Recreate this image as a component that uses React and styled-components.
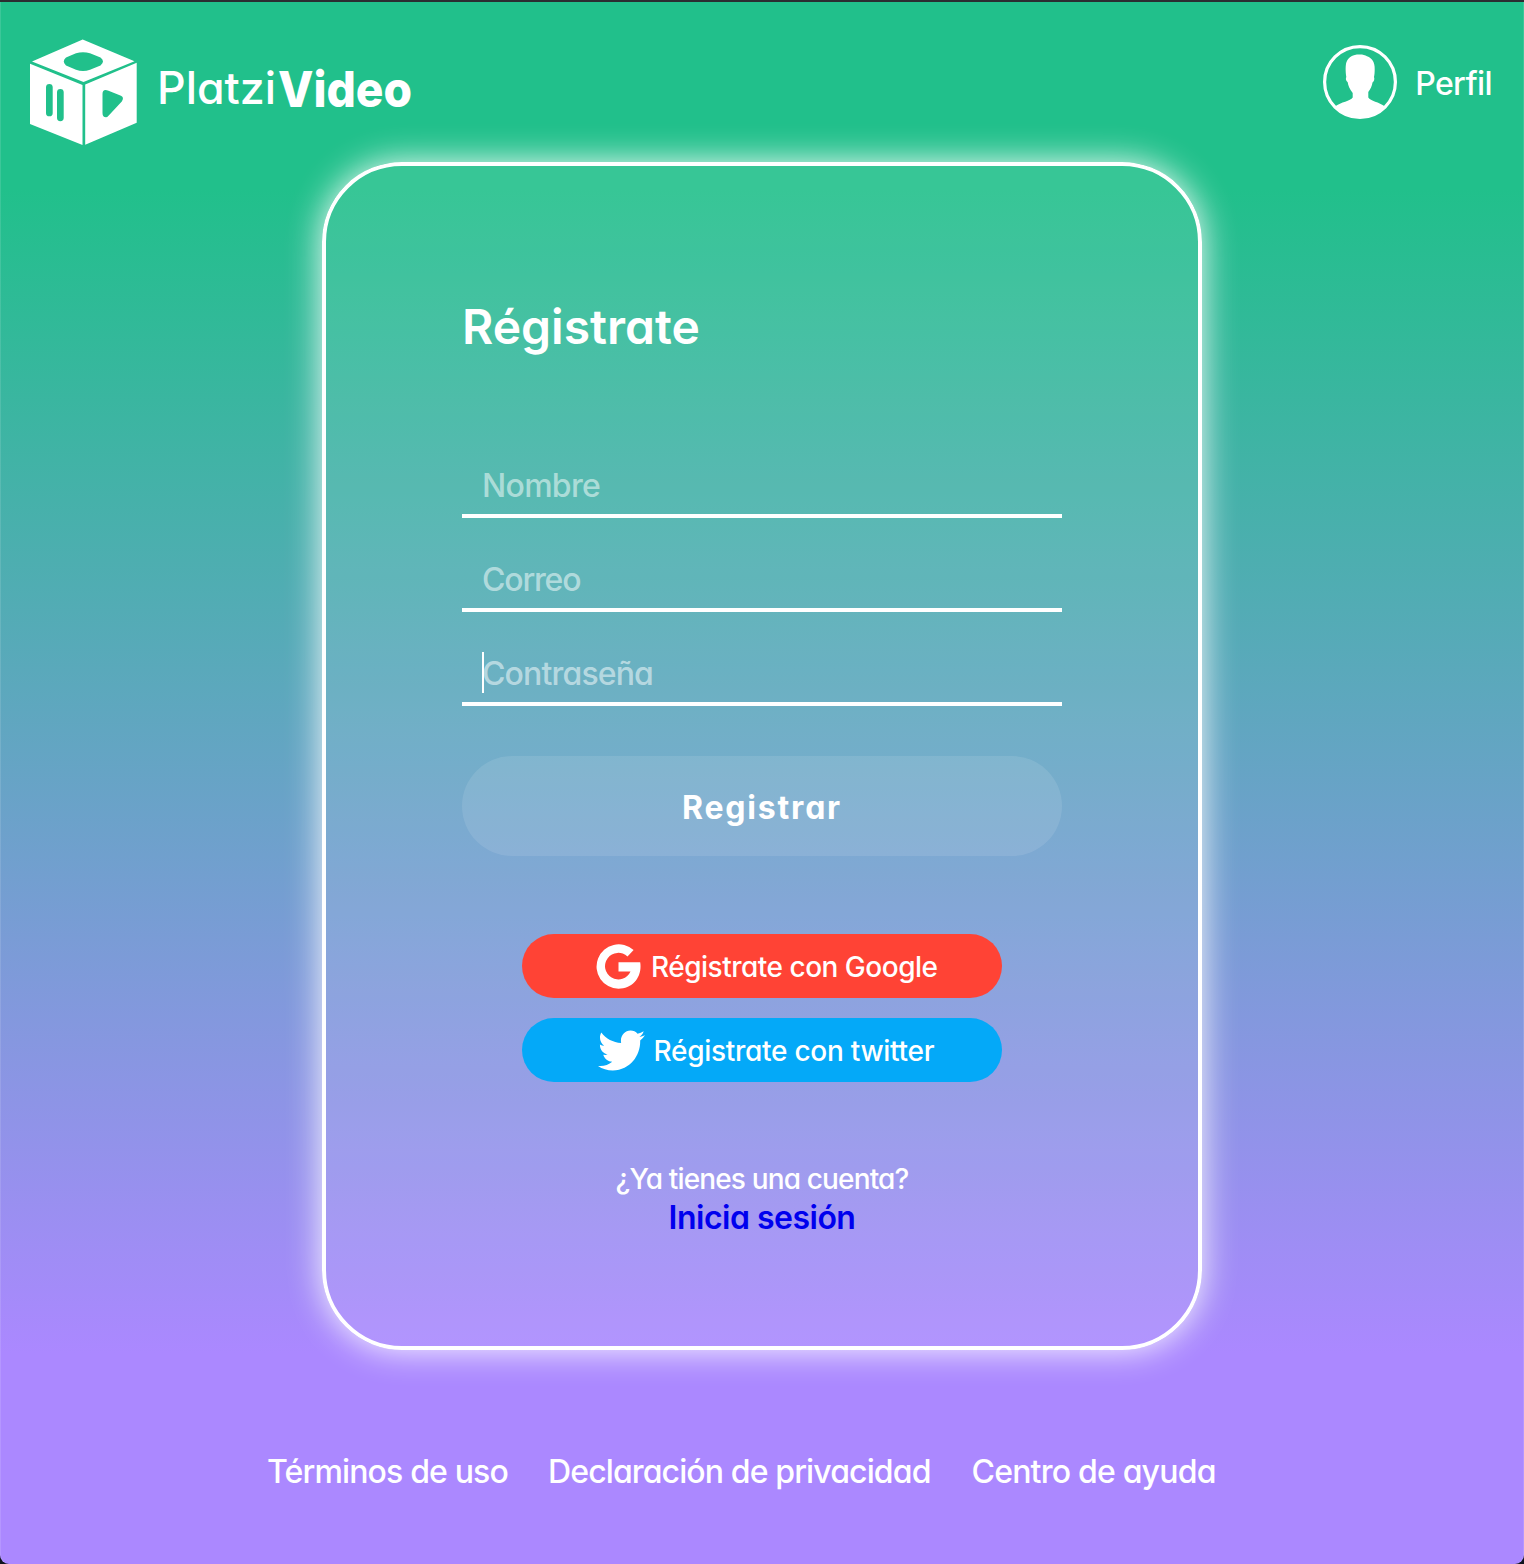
import React from "react";
import styled, { createGlobalStyle } from "styled-components";
import { FaTwitter } from "react-icons/fa";

const GlobalStyle = createGlobalStyle`
  * { box-sizing: border-box; }
  body {
    margin: 0;
    background: #10131f;
    font-family: Inter, Lato, "Open Sans", sans-serif;
    font-feature-settings: "cv11" 1;
    color: #fff;
  }
`;

const Page = styled.div`
  display: flex;
  flex-direction: column;
  width: 1524px;
  height: 1564px;
  overflow: hidden;
  border-top: 2px solid #2b2d31;
  border-radius: 0 0 9px 9px;
  background: linear-gradient(#21c08b 12%, #ab88ff 86.5%);
  box-shadow: inset 1px 0 rgba(255, 255, 255, 0.12), inset -1px 0 rgba(255, 255, 255, 0.12);
`;

const Header = styled.header`
  display: flex;
  justify-content: space-between;
  align-items: flex-start;
  height: 160px;
  padding: 37px 32px 0 30px;
`;

const Logo = styled.svg`
  display: block;
  width: 390px;
  height: 107px;
`;

const Profile = styled.div`
  display: flex;
  align-items: center;
  gap: 18px;
  margin-top: 6px;
`;

const Label = styled.span`
  padding-top: ${(p) => p.$drop || 0}px;
  font-size: ${(p) => p.$size || 32}px;
  font-weight: ${(p) => p.$weight || 500};
  line-height: ${(p) => p.$line || 40}px;
  letter-spacing: ${(p) => p.$track || 0}px;
  white-space: nowrap;
`;

const Avatar = styled.svg`
  width: 74px;
  height: 74px;
`;

const Card = styled.main`
  display: flex;
  flex-direction: column;
  align-items: center;
  align-self: center;
  width: 880px;
  height: 1188px;
  padding: 126px 136px 0;
  border: 4px solid #fff;
  border-radius: 80px;
  background: rgba(255, 255, 255, 0.1);
  box-shadow: 0 0 34px rgba(255, 255, 255, 0.95);
`;

const Title = styled.h1`
  align-self: flex-start;
  margin: 0;
  font-size: 48px;
  font-weight: 600;
  line-height: 70px;
  letter-spacing: ${(p) => p.$track}px;
`;

const Form = styled.form`
  display: flex;
  flex-direction: column;
  width: 600px;
  margin-top: 92px;
`;

const Field = styled.label`
  position: relative;
  display: block;
  height: 64px;
  margin-bottom: 30px;
  border-bottom: 4px solid #fff;
`;

const Input = styled.input`
  width: 100%;
  height: 60px;
  padding: 2px 20px 0;
  border: 0;
  outline: 0;
  background: transparent;
  color: #fff;
  font: 500 32px Inter, Lato, sans-serif;
  font-feature-settings: "cv11" 1;
  letter-spacing: ${(p) => p.$track}px;
  &::placeholder { color: rgba(255, 255, 255, 0.52); opacity: 1; }
`;

const Caret = styled.i`
  position: absolute;
  left: 20px;
  top: 10px;
  width: 2px;
  height: 41px;
  background: #fff;
`;

const Submit = styled.button`
  height: 100px;
  margin-top: 20px;
  padding-top: 3px;
  border: 0;
  border-radius: 50px;
  background: rgba(255, 255, 255, 0.1);
  color: #fff;
  font: 700 32px Inter, Lato, sans-serif;
  font-feature-settings: "cv11" 1;
  letter-spacing: 1.8px;
`;

const Socials = styled.div`
  display: flex;
  flex-direction: column;
  gap: 20px;
  margin-top: 78px;
`;

const Social = styled.button`
  display: flex;
  align-items: center;
  width: 480px;
  height: 64px;
  padding: 0 0 0 ${(p) => p.$inset}px;
  gap: ${(p) => p.$gap}px;
  border: 0;
  border-radius: 32px;
  background: ${(p) => p.$color};
  color: #fff;
  font-family: inherit;
  font-feature-settings: inherit;
`;

const GoogleMark = styled.svg`
  width: 45px;
  height: 45px;
  flex: none;
`;

const Bird = styled(FaTwitter)`
  width: 47px;
  height: 49px;
  flex: none;
`;

const Account = styled.div`
  display: flex;
  flex-direction: column;
  align-items: center;
  margin-top: 78px;
`;

const Login = styled(Label).attrs({ as: "a" })`
  color: #0000ee;
`;

const Footer = styled.footer`
  display: flex;
  gap: 40px;
  margin: 102px 0 0 267px;
`;

const FootLink = styled(Label)`
  width: ${(p) => p.$width}px;
`;

function PlatziLogo() {
  return (
    <Logo viewBox="30 39 390 107" fill="#fff">
      <path fillRule="evenodd" d="M82.7 39.5 134.5 61.2 83.5 82 32 61.6ZM76 53.2 66 57.6Q61.5 61.5 66 65.4L76 69.8Q83 72.3 90 69.8L100.5 65.4Q105.5 61.5 100.5 57.6L90 53.2Q83 51.2 76 53.2Z" />
      <path fillRule="evenodd" d="M30 63.7 82.5 85V145L30 124ZM46 87.3V113A3.35 3.35 0 0 0 52.7 113V87.3A3.35 3.35 0 0 0 46 87.3ZM57 92.3V117.8A3.35 3.35 0 0 0 63.7 117.8V92.3A3.35 3.35 0 0 0 57 92.3Z" />
      <path fillRule="evenodd" d="M85.2 84.5 136.7 62.7V122.7L85.2 144.8ZM102.5 94V113Q102.5 117.3 106 117.3Q107.2 117.3 108.5 115.8L121.8 101.5Q124.5 97.5 121 95.8L108.5 90.7Q102.5 88.5 102.5 94Z" />
      <text x="157" y="103.5" fontSize="44.5" fontWeight="500" textLength="119" lengthAdjust="spacingAndGlyphs">Platzi</text>
      <text x="278" y="107" fontSize="50" fontWeight="800" textLength="134" lengthAdjust="spacingAndGlyphs">Video</text>
    </Logo>
  );
}

function UserIcon() {
  return (
    <Avatar viewBox="0 0 74 74">
      <circle cx="37" cy="37" r="35.4" fill="none" stroke="#fff" strokeWidth="3.2" />
      <path fill="#fff" d="M29.7 52.5V48C26.500 44 25 40 24.700 37.200C22.800 36 22.500 33.500 23.300 32C22.500 27 22.300 20 23.500 17C26 11.500 30 9.500 36 9.500C39 9.300 42 10 44 11.200C49.500 13 51.900 18 51.700 24C51.700 27 51.500 30 51 32C51.800 34 51 36.500 49.500 37.500C49 41 47.500 44 45.300 47V52.500C47.500 56 56 57 62 61.500Q51 73 37 73Q23 73 12 61.500C18 57 27.500 56 29.700 52.500Z" />
    </Avatar>
  );
}

export default function App() {
  return (
    <>
      <GlobalStyle />
      <Page>
        <Header>
          <PlatziLogo />
          <Profile>
            <UserIcon />
            <Label $drop={3} $track={-0.6}>Perfil</Label>
          </Profile>
        </Header>
        <Card>
          <Title $track={0}>Régistrate</Title>
          <Form onSubmit={(e) => e.preventDefault()}>
            <Field><Input placeholder="Nombre" $track={-0.7} /></Field>
            <Field><Input placeholder="Correo" $track={-1.2} /></Field>
            <Field>
              <Input type="password" placeholder="Contraseña" $track={-0.85} />
              <Caret />
            </Field>
            <Submit>Registrar</Submit>
          </Form>
          <Socials>
            <Social $color="#ff4335" $inset={74} $gap={10}>
              <GoogleMark viewBox="0 0 45 45">
                <path fill="#fff" d="M37.6 6 31.5 12.5A13.3 13.3 0 1 0 34.5 27.5H22.5V18.3H44.2C46.5 32.5 37 44.7 22.5 44.7A22.2 22.2 0 1 1 37.6 6Z" />
              </GoogleMark>
              <Label $size={28} $drop={2} $track={-0.5}>Régistrate con Google</Label>
            </Social>
            <Social $color="#04a9f8" $inset={75.5} $gap={9}>
              <Bird preserveAspectRatio="none" />
              <Label $size={28} $drop={2} $track={-0.28}>Régistrate con twitter</Label>
            </Social>
          </Socials>
          <Account>
            <Label $size={28} $line={38} $track={-0.85}>¿Ya tienes una cuenta?</Label>
            <Login $weight={600} $track={-0.5}>Inicia sesión</Login>
          </Account>
        </Card>
        <Footer>
          <FootLink $width={241} $track={-0.85}>Términos de uso</FootLink>
          <FootLink $width={383.5} $track={-0.88}>Declaración de privacidad</FootLink>
          <FootLink $width={244} $track={-0.8}>Centro de ayuda</FootLink>
        </Footer>
      </Page>
    </>
  );
}
